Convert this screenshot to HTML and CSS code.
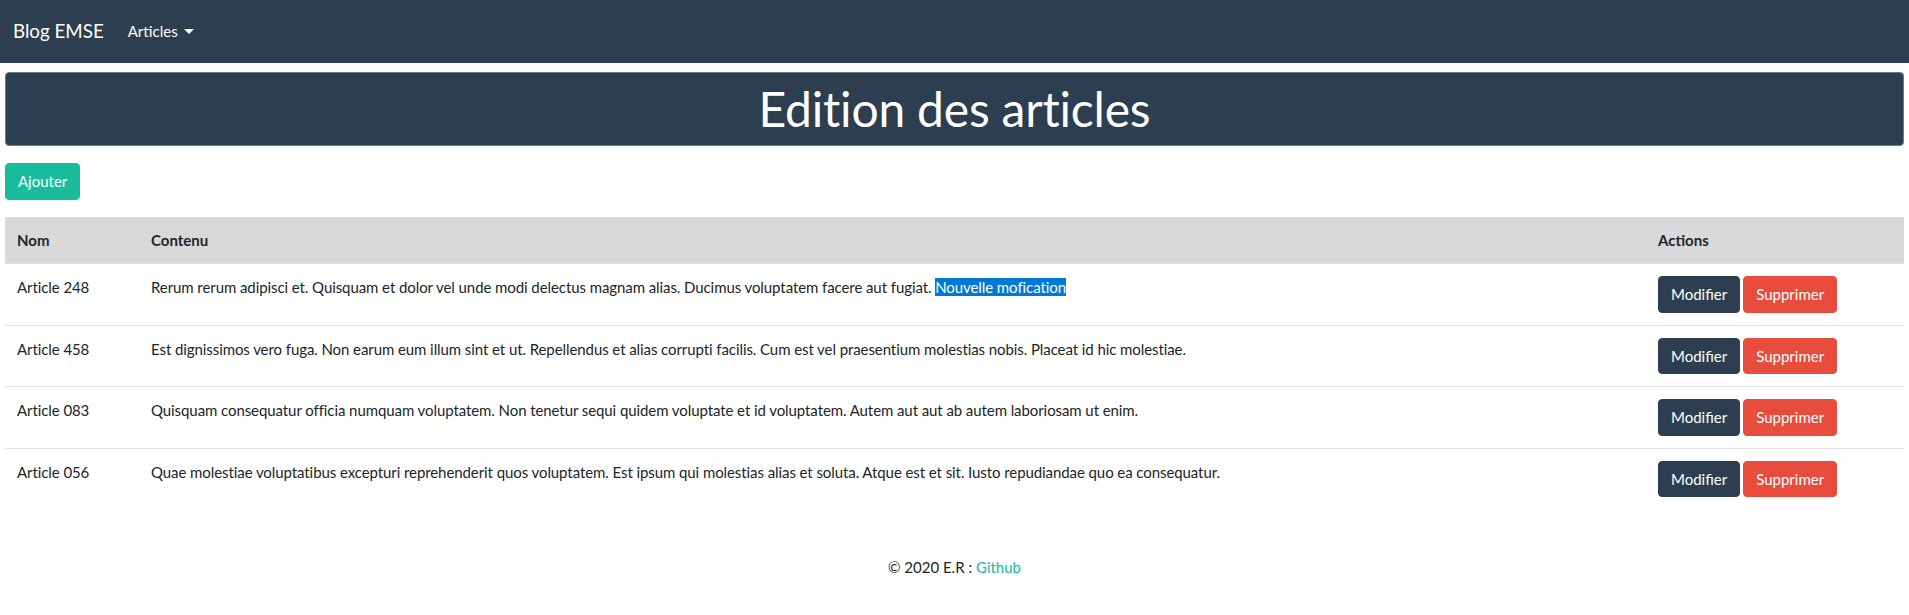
FILE: index.html
```html
<!DOCTYPE html>
<html lang="fr">
<head>
<meta charset="utf-8">
<title>Blog EMSE</title>
<link rel="stylesheet" href="styles.css">
</head>
<body>
<nav class="navbar">
  <a class="brand" href="#">Blog EMSE</a>
  <a class="nav-link" href="#">Articles <span class="caret"></span></a>
</nav>
<main class="main">
  <div class="banner"><h1 class="banner-title">Edition des articles</h1></div>
  <div class="toolbar"><button class="btn btn-success">Ajouter</button></div>
  <table class="table">
    <thead>
      <tr><th class="col-nom">Nom</th><th>Contenu</th><th class="col-actions">Actions</th></tr>
    </thead>
    <tbody>
      <tr>
        <td>Article 248</td>
        <td>Rerum rerum adipisci et. Quisquam et dolor vel unde modi delectus magnam alias. Ducimus voluptatem facere aut fugiat. <span class="selected">Nouvelle mofication</span></td>
        <td class="actions"><button class="btn btn-primary">Modifier</button><button class="btn btn-danger">Supprimer</button></td>
      </tr>
      <tr>
        <td>Article 458</td>
        <td>Est dignissimos vero fuga. Non earum eum illum sint et ut. Repellendus et alias corrupti facilis. Cum est vel praesentium molestias nobis. Placeat id hic molestiae.</td>
        <td class="actions"><button class="btn btn-primary">Modifier</button><button class="btn btn-danger">Supprimer</button></td>
      </tr>
      <tr>
        <td>Article 083</td>
        <td>Quisquam consequatur officia numquam voluptatem. Non tenetur sequi quidem voluptate et id voluptatem. Autem aut aut ab autem laboriosam ut enim.</td>
        <td class="actions"><button class="btn btn-primary">Modifier</button><button class="btn btn-danger">Supprimer</button></td>
      </tr>
      <tr>
        <td>Article 056</td>
        <td>Quae molestiae voluptatibus excepturi reprehenderit quos voluptatem. Est ipsum qui molestias alias et soluta. Atque est et sit. Iusto repudiandae quo ea consequatur.</td>
        <td class="actions"><button class="btn btn-primary">Modifier</button><button class="btn btn-danger">Supprimer</button></td>
      </tr>
    </tbody>
  </table>
</main>
<footer class="footer">© 2020 E.R : <a class="link" href="#">Github</a></footer>
</body>
</html>
```
FILE: styles.css
```css
* { box-sizing: border-box; }
html, body { margin: 0; padding: 0; }
body {
  font-family: Lato, "Open Sans", "Liberation Sans", sans-serif;
  font-size: 15px;
  line-height: 1.5;
  color: #212529;
  background: #fff;
}
.navbar {
  height: 63px;
  background: #2c3e50;
  display: flex;
  align-items: center;
  padding: 0 13px;
}
.brand {
  color: #fff;
  text-decoration: none;
  font-size: 18.75px;
  margin-right: 24px;
}
.nav-link {
  color: #fff;
  text-decoration: none;
  font-size: 15px;
  display: flex;
  align-items: center;
}
.caret {
  display: inline-block;
  margin-left: 6px;
  width: 0; height: 0;
  border-top: 5px solid #fff;
  border-left: 5px solid transparent;
  border-right: 5px solid transparent;
}
.main { padding: 9px 5px 0; }
.banner {
  background: #2c3e50;
  border: 1px solid #6b7a86;
  border-radius: 4px;
  height: 74px;
  display: flex;
  align-items: center;
  justify-content: center;
}
.banner-title {
  margin: 0;
  color: #fff;
  font-weight: 400;
  font-size: 48px;
  letter-spacing: -0.2px;
  line-height: 1;
}
.toolbar { padding: 17px 0; }
.btn {
  font-family: inherit;
  font-size: 15px;
  line-height: 1.5;
  color: #fff;
  border: 1px solid transparent;
  border-radius: 4px;
  padding: 6px 12px;
  cursor: pointer;
}
.btn-success { background: #18bc9c; border-color: #18bc9c; }
.btn-primary { background: #2c3e50; border-color: #2c3e50; }
.btn-danger { background: #e74c3c; border-color: #e74c3c; margin-left: 3px; }
.table {
  width: 100%;
  border-collapse: collapse;
}
.table th {
  background: #d9d9d9;
  font-weight: 700;
  text-align: left;
  padding: 12px;
  border-bottom: 1px solid #dee2e6;
}
.table td {
  padding: 12px;
  vertical-align: top;
  border-top: 1px solid #dee2e6;
  letter-spacing: -0.08px;
}
.table tbody tr:first-child td { border-top: none; }
.col-nom { width: 134px; }
.col-actions { width: 258px; }
.actions { white-space: nowrap; }
.actions .btn { letter-spacing: 0; }
.selected { background: #0078d7; color: #fff; }
.footer {
  text-align: center;
  padding-top: 47px;
}
.link { color: #18bc9c; text-decoration: none; }
```
